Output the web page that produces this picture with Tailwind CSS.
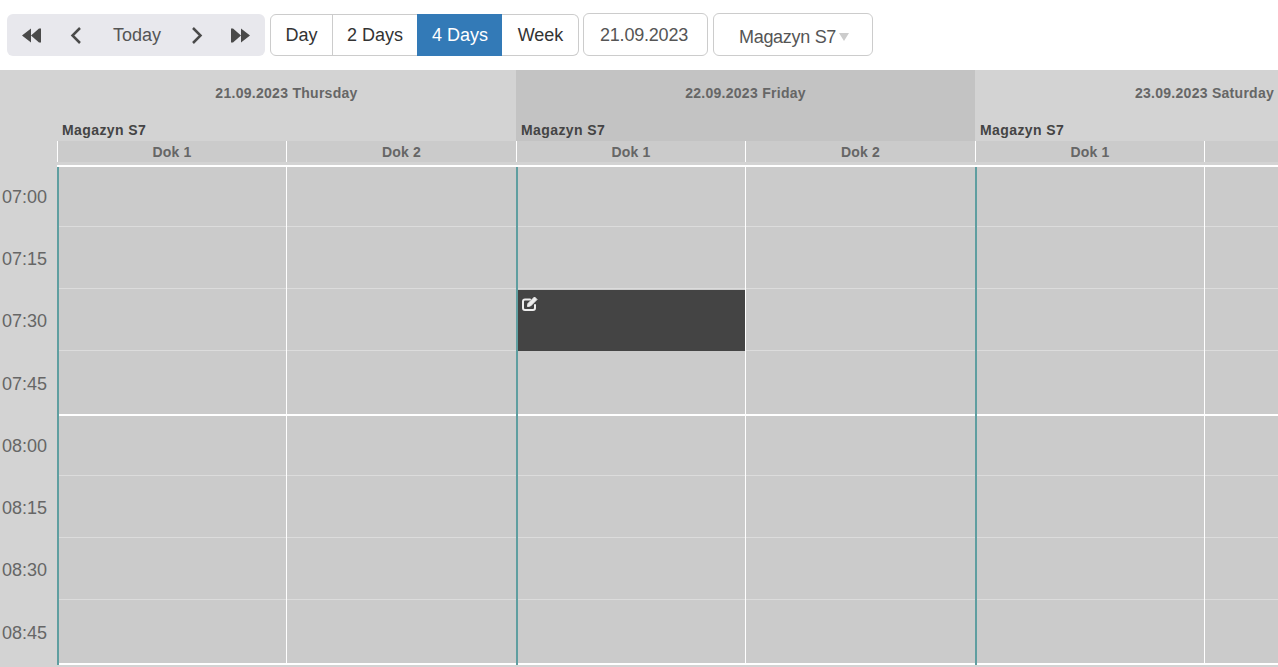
<!DOCTYPE html>
<html lang="en">
<head>
    <meta charset="UTF-8">
    <title>Dock calendar</title>
    <script src="https://cdn.jsdelivr.net/npm/@tailwindcss/browser@4"></script>
</head>
<body class="h-[667px] overflow-hidden bg-white font-['Liberation_Sans',Arial,sans-serif]">
    <!-- Toolbar -->
    <div class="flex h-[70px] items-start pl-[7px] pt-[13px] text-[18px] leading-none">
        <div class="mt-px flex h-[42px] w-[258px] shrink-0 items-center rounded-md bg-[#e8e8ed] text-[#555]">
            <svg class="ml-[15px] h-[15px] w-[19px] shrink-0" viewBox="0 0 19 15" fill="#4a4a4a"><path d="M0 7.5 9 .5V14.5ZM9 7.5 17 .5V14.5ZM17 .5H19V14.5H17Z"/></svg>
            <svg class="ml-[29px] h-[17px] w-[11px] shrink-0" viewBox="0 0 11 17" fill="none" stroke="#4a4a4a" stroke-width="2.5"><path d="M10 1 2.5 8.5 10 16"/></svg>
            <span class="ml-[32px]">Today</span>
            <svg class="ml-[31px] h-[17px] w-[11px] shrink-0" viewBox="0 0 11 17" fill="none" stroke="#4a4a4a" stroke-width="2.5"><path d="M1 1 8.5 8.5 1 16"/></svg>
            <svg class="ml-[28px] h-[15px] w-[19px] shrink-0" viewBox="0 0 19 15" fill="#4a4a4a"><path d="M0 .5H2V14.5H0ZM2 .5 10 7.5 2 14.5ZM10 .5 19 7.5 10 14.5Z"/></svg>
        </div>
        <div class="ml-[5px] mt-px flex h-[42px] shrink-0 text-[#333]">
            <div class="flex w-[63px] items-center justify-center rounded-l-md border border-[#ccc]">Day</div>
            <div class="-ml-px flex w-[86px] items-center justify-center border border-[#ccc]">2 Days</div>
            <div class="-ml-px flex w-[85px] items-center justify-center bg-[#337ab7] pl-px text-white">4 Days</div>
            <div class="flex w-[77px] items-center justify-center rounded-r-md border border-l-0 border-[#ccc] pl-px">Week</div>
        </div>
        <div class="ml-[4px] flex h-[43px] w-[125px] shrink-0 items-center justify-center rounded-md border border-[#ccc] pr-[3px] tracking-[-0.2px] text-[#555]">21.09.2023</div>
        <div class="ml-[5px] flex h-[43px] w-[160px] shrink-0 items-center rounded-md border border-[#ccc] pl-[25px] pt-[4px] tracking-[-0.3px] text-[#555]">
            Magazyn S7
            <span class="ml-[3px] h-0 w-0 border-x-[5px] border-t-[8px] border-x-transparent border-t-[#ccc]"></span>
        </div>
    </div>

    <!-- Calendar -->
    <div id="calendar" class="flex h-[597px] overflow-hidden bg-[#d3d3d3]">
        <div class="w-[57px] shrink-0">
            <div class="h-[97px]"></div>
            <div id="times"></div>
        </div>
        <div id="days" class="flex"></div>
    </div>

    <script>
        const times = ['07:00', '07:15', '07:30', '07:45', '08:00', '08:15', '08:30', '08:45'];
        const days = [
            { label: '21.09.2023 Thursday', head: 'bg-[#d3d3d3]' },
            { label: '22.09.2023 Friday', head: 'bg-[#c3c3c3]' },
            { label: '23.09.2023 Saturday', head: 'bg-[#d3d3d3]' }
        ];

        // slot heights repeat per hour, the last one holds the thick hour line
        const slotClass = ['h-[60px] border-b border-[#dcdcdc]', 'h-[62px] border-b border-[#dcdcdc]', 'h-[62px] border-b border-[#dcdcdc]', 'h-[65px] border-b-2 border-white'];
        const labelClass = ['h-[60px] pb-[1px]', 'h-[62px] pt-[1px]', 'h-[62px] pt-[1px]', 'h-[65px] pt-[1px]'];

        document.getElementById('times').innerHTML = times.map((t, i) =>
            `<div class="box-border flex ${labelClass[i % 4]} items-center justify-end pr-[10px] text-[18px] leading-none text-[#666]">${t}</div>`
        ).join('');

        function slots() {
            return times.map((t, i) => `<div class="box-border ${slotClass[i % 4]}"></div>`).join('');
        }

        document.getElementById('days').innerHTML = days.map((day, d) => `
            <div class="relative w-[459px] shrink-0">
                <div class="h-[71px] ${day.head}">
                    <div class="flex h-[46px] items-center justify-center text-[14px] font-bold tracking-[0.28px] text-[#666]">${day.label}</div>
                    <div class="flex h-[25px] items-center pl-[5px] pt-[3px] text-[14px] font-bold tracking-[0.4px] text-[#444]">Magazyn S7</div>
                </div>
                <div class="flex h-[21px] bg-[#cbcbcb] text-[14px] font-bold tracking-[0.2px] text-[#666]">
                    <div class="flex w-[229px] items-center justify-center border-l border-white pt-[1px]">Dok 1</div>
                    <div class="flex w-[230px] items-center justify-center border-l border-white pt-[1px]">${d < 2 ? 'Dok 2' : ''}</div>
                </div>
                <div class="h-[5px] border-b-2 border-white"></div>
                <div class="flex bg-[#cbcbcb]">
                    <div class="w-[229px] border-l-2 border-[#5f9ea0]">${slots()}</div>
                    <div class="w-[230px] border-l border-white">${slots()}</div>
                </div>
                ${d === 1 ? `<div class="absolute left-[2px] top-[220px] flex h-[61px] w-[227px] items-start bg-[#444] pl-[4px] pt-[6px]">
                    <svg class="h-[16px] w-[16px]" viewBox="0 0 16 16" fill="none" stroke="#eee" stroke-width="2"><path d="M8 3.5H3Q1 3.5 1 5.5V12Q1 14 3 14H11Q13 14 13 12V9" stroke-linecap="round"/><path d="M6 7.5 12.5 1 15 3.5 8.5 10 5.5 10.5Z" fill="#eee" stroke-width="1"/></svg>
                </div>` : ''}
            </div>`).join('');
    </script>
</body>
</html>
